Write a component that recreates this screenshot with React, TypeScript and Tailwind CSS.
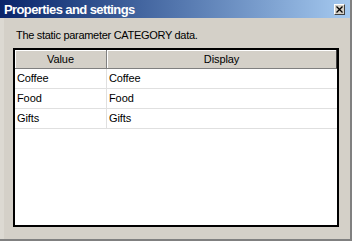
import React from "react";

const rows = ["Coffee", "Food", "Gifts"];

export default function App() {
  return (
    <div className="w-[352px] h-[241px] bg-[#d4d0c8] flex flex-col overflow-hidden border-b-2 border-r-2 border-b-[#808080] border-r-[#808080]" style={{ fontFamily: "'Liberation Sans', Arial, sans-serif" }}>
      <div className="h-[18px] flex items-center justify-between pl-[4px] pr-[5px] bg-gradient-to-r from-[#0a246a] to-[#a6caf0]">
        <span className="text-white font-bold text-[13px] leading-none tracking-[-0.6px]">Properties and settings</span>
        <div className="w-[11px] h-[11px] bg-[#d4d0c8] border border-t-white border-l-white border-b-[#404040] border-r-[#404040] flex items-center justify-center">
          <svg width="7" height="7" viewBox="0 0 7 7"><path d="M0.5 0.5 L6.5 6.5 M6.5 0.5 L0.5 6.5" stroke="#000" strokeWidth="1.3" /></svg>
        </div>
      </div>
      <div className="flex-1 flex flex-col pl-[9px] pr-[11px] pt-[10px] pb-[12px] border-l-[4px] border-l-[#dcd9d2]">
        <div className="text-[11px] leading-[14px] text-black pl-[3px] mb-[6px] tracking-[-0.3px]">The static parameter CATEGORY data.</div>
        <div className="flex-1 bg-white border-2 border-black flex flex-col text-[11px] tracking-[-0.1px]">
          <div className="flex h-[19px] bg-[#d4d0c8]">
            <div className="w-[92px] flex items-center justify-center border-r border-r-[#808080] border-b border-b-[#808080] shadow-[inset_1px_1px_0_#fff]">Value</div>
            <div className="flex-1 flex items-center justify-center border-r border-r-[#404040] border-b border-b-[#808080] shadow-[inset_1px_1px_0_#fff]">Display</div>
          </div>
          {rows.map((r) => (
            <div key={r} className="flex h-[20px] border-b border-b-[#e0e0e0]">
              <div className="w-[92px] flex items-center pl-[2px] border-r border-r-[#e0e0e0]">{r}</div>
              <div className="flex-1 flex items-center pl-[2px]">{r}</div>
            </div>
          ))}
        </div>
      </div>
    </div>
  );
}
